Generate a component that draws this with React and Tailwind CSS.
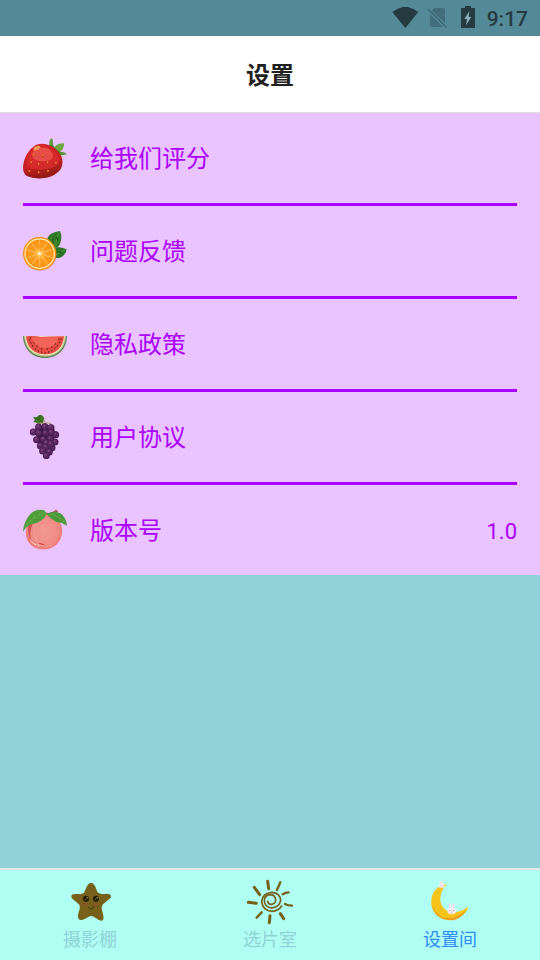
const SEEDS = [
  [57, 75], [84, 76], [49, 97], [71, 102], [98, 97], [123, 98], [43, 123], [71, 127], [99, 122],
]

const GRAPES = [
  [71, 57], [90, 56], [108, 59], [55, 72], [122, 80], [71, 75], [92, 75], [109, 73], [120, 102], [111, 119],
  [65, 95], [85, 94], [106, 92], [94, 105], [76, 113], [92, 117], [107, 108], [83, 129], [103, 132], [94, 143],
]

const MELON_SEEDS = [
  [43, 74, -25], [48, 84, -25], [53, 94, -25], [61, 102, -25], [70, 108, -20], [80, 112, -8], [90, 114, 0],
  [101, 111, 12], [111, 107, 20], [120, 100, 25], [127, 92, 25], [134, 82, 25], [138, 73, 25],
  [46, 68, -20], [57, 83, -25], [66, 94, -25], [80, 102, -5], [97, 102, 8], [110, 97, 20], [121, 87, 25], [131, 73, 20],
]

function Strawberry() {
  return (
    <svg viewBox="24 18 132 132" className="size-11 shrink-0" aria-hidden="true">
      <defs>
        <linearGradient id="berry" x1="0" y1="0" x2="0.3" y2="1">
          <stop offset="0" stopColor="#d92628" />
          <stop offset="0.65" stopColor="#c42022" />
          <stop offset="1" stopColor="#9c1c18" />
        </linearGradient>
      </defs>
      <path d="M103 48Q101 31 110 23Q117 36 113 53Z" fill="#5d9b38" />
      <path d="M114 62Q121 38 147 40Q149 59 130 68Z" fill="#6caa40" />
      <path d="M124 67Q142 61 156 72Q143 78 128 75Z" fill="#5a9734" />
      <path d="M100 44L115 46L121 55L137 66L132 77Z" fill="#4c872b" />
      <path d="M62 45Q80 38 98 44Q125 52 139 78Q147 99 137 118Q122 138 92 144Q57 148 35 138Q23 129 24 109Q29 66 62 45Z" fill="url(#berry)" />
      <path d="M37 110Q33 80 52 63Q80 48 106 58Q127 68 132 87Q133 110 107 115Q64 125 37 110Z" fill="#dd2f2f" opacity=".7" />
      <path d="M53 66Q68 50 93 53Q113 61 114 79Q110 94 86 94Q62 95 53 82Q49 74 53 66Z" fill="#e9514b" opacity=".9" />
      <path d="M57 62Q53 55 60 50Q70 45 77 50Q74 60 57 62Z" fill="#f29a55" />
      <path d="M28 128Q74 145 127 120Q113 140 82 144Q43 147 28 128Z" fill="#8e1b16" opacity=".6" />
      {SEEDS.map(([x, y]) => (
        <g key={`${x}-${y}`}>
          <ellipse cx={x} cy={y + 1} rx="4" ry="4" fill="#b8241c" opacity=".7" />
          <ellipse cx={x} cy={y} rx="2.6" ry="3" fill="#f38b35" />
        </g>
      ))}
    </svg>
  )
}

function Orange() {
  return (
    <svg viewBox="24 21 132 132" className="size-11 shrink-0" aria-hidden="true">
      <defs>
        <radialGradient id="pulp">
          <stop offset="0" stopColor="#ffbd45" />
          <stop offset=".5" stopColor="#fda01c" />
          <stop offset="1" stopColor="#f98b08" />
        </radialGradient>
      </defs>
      <path d="M97 48Q104 31 135 27Q142 43 137 59Q135 73 121 79Q105 68 97 48Z" fill="#2f7a27" />
      <path d="M117 79Q130 71 155 82Q153 99 136 107L117 109Z" fill="#2a7624" />
      <path d="M133 31Q121 52 122 72M104 46L121 60M152 83L122 98" fill="none" stroke="#5f9c3d" strokeWidth="2.5" />
      <path d="M124 45L128 53M112 51L116 61M132 89L140 93" stroke="#1f5c1c" strokeWidth="4" strokeLinecap="round" />
      <circle cx="76" cy="98" r="49" fill="#aa718e" opacity=".25" />
      <circle cx="74" cy="95" r="50" fill="#f58b00" />
      <circle cx="74" cy="95" r="46" fill="#ffe7a8" />
      <circle cx="74" cy="95" r="42" fill="url(#pulp)" />
      {[0, 36, 72, 108, 144, 180, 216, 252, 288, 324].map(angle => (
        <g key={angle} transform={`rotate(${angle} 74 95)`}>
          <path d="M74 95V54" stroke="#ffd57c" strokeWidth="2" />
          <path d="M78 83L84 58M83 80L91 62" stroke="#fdb348" strokeWidth="1.4" />
          <path d="M82 85L91 70M80 78L82 66" stroke="#f07c06" strokeWidth="1.8" />
        </g>
      ))}
      <circle cx="74" cy="95" r="5" fill="#fff2c5" />
    </svg>
  )
}

function Watermelon() {
  return (
    <svg viewBox="24 21 132 132" className="size-11 shrink-0" aria-hidden="true">
      <path d="M24 63L156 63C155 102 129 129 90 129C51 129 25 102 24 63Z" fill="#5c8452" />
      <path d="M27 63H153C151 101 126 125 90 125C54 125 29 101 27 63Z" fill="#b3c585" />
      <path d="M30 63H150C148 99 125 121 90 121C55 121 32 99 30 63Z" fill="#f3dfba" />
      <path d="M33 64Q60 62 78 66Q110 65 147 64C144 98 123 118 90 118C57 118 36 98 33 64Z" fill="#e84b44" />
      <path d="M49 66Q80 68 131 66Q123 98 90 99Q58 97 49 66Z" fill="#f2655b" />
      {MELON_SEEDS.map(([x, y, turn]) => (
        <ellipse key={`${x}-${y}`} cx={x} cy={y} rx="1.6" ry="3.2" transform={`rotate(${turn} ${x} ${y})`} fill="#6d2825" />
      ))}
    </svg>
  )
}

function Grapes() {
  return (
    <svg viewBox="24 21 132 132" className="size-11 shrink-0" aria-hidden="true">
      <path d="M53 26Q64 30 69 24Q75 18 83 23L88 31L84 46Q75 44 72 49Q64 43 55 41L60 35Z" fill="#3f7524" />
      <path d="M59 30L73 34L82 43M73 34L74 24" fill="none" stroke="#2c581c" strokeWidth="2" />
      <path d="M68 46Q82 44 92 49M87 36L94 51M91 45Q109 43 112 52M102 46L109 51" fill="none" stroke="#b49a62" strokeWidth="3" />
      <path d="M61 59L118 63L117 112L98 137L79 131L71 114Z" fill="#3c1746" />
      {GRAPES.map(([x, y]) => (
        <g key={`${x}-${y}`}>
          <circle cx={x} cy={y} r="10.5" fill="#451c4e" />
          <circle cx={x - 1} cy={y - 1} r="8.5" fill="#592861" />
          <circle cx={x - 2} cy={y - 3} r="3.5" fill="#7a437f" />
        </g>
      ))}
    </svg>
  )
}

function Peach() {
  return (
    <svg viewBox="24 24 132 132" className="size-11 shrink-0" aria-hidden="true">
      <defs>
        <radialGradient id="peach">
          <stop offset="0" stopColor="#f29a90" />
          <stop offset=".75" stopColor="#f08d86" />
          <stop offset="1" stopColor="#ea7b75" />
        </radialGradient>
      </defs>
      <path d="M38 74Q60 38 92 37Q129 42 139 76Q148 111 123 136Q92 158 57 142Q29 125 33 91Q34 81 38 74Z" fill="url(#peach)" />
      <path d="M41 74Q36 98 48 121Q42 94 53 72Z" fill="#d65050" />
      <path d="M60 76Q52 105 70 128Q86 142 110 137" fill="none" stroke="#f4a399" strokeWidth="4" opacity=".6" />
      <path d="M70 129Q80 137 93 136Q83 132 74 128Z" fill="#d83c42" />
      <path d="M48 124Q55 133 63 134M68 133L72 138" fill="none" stroke="#ffd8d3" strokeWidth="3" strokeLinecap="round" />
      <path d="M94 39Q112 39 122 29L130 34Q119 44 99 44Z" fill="#a65b59" />
      <path d="M24 96Q25 65 46 42Q65 25 88 31L95 42Q82 67 52 72Q33 78 24 96Z" fill="#4f9f3c" />
      <path d="M94 41Q117 31 136 40Q153 51 156 77Q142 67 123 65Q106 57 94 41Z" fill="#4a9838" />
      <path d="M29 83Q48 50 87 38M101 42Q130 44 150 67" fill="none" stroke="#6fb04a" strokeWidth="2.5" />
      <path d="M48 59L53 47M64 49L69 37M57 60L71 60M122 48L127 42M126 52L128 61" stroke="#3f8c35" strokeWidth="2" />
    </svg>
  )
}

function StarIcon() {
  return (
    <svg viewBox="51 51 138 138" className="size-[46px]" aria-hidden="true">
      <path d="M111 72Q123 52 135 72L142 89Q148 97 165 96Q180 94 183 101Q184 108 174 114L159 127Q152 135 157 149Q163 168 159 174Q153 180 137 168Q126 159 116 164Q101 174 90 174Q80 170 86 151Q92 134 88 128L69 112Q61 104 66 98Q71 95 84 96Q98 97 102 92Z" fill="#776019" />
      <g fill="#211b0a">
        <circle cx="108" cy="110" r="9" />
        <circle cx="138" cy="110" r="9" />
      </g>
      <g fill="#8a7434">
        <circle cx="112" cy="107" r="3" />
        <circle cx="142" cy="107" r="3" />
        <circle cx="106" cy="112" r="2" />
        <circle cx="136" cy="112" r="2" />
      </g>
      <ellipse cx="105" cy="126" rx="8" ry="3" fill="#8f4f37" />
      <ellipse cx="140" cy="127" rx="8" ry="3" fill="#8f4f37" />
      <path d="M115 136Q119 141 123 142Q130 141 131 133" fill="none" stroke="#3a2c0d" strokeWidth="2.5" strokeLinecap="round" />
    </svg>
  )
}

function SunIcon() {
  return (
    <svg viewBox="51 51 138 138" className="size-[46px]" aria-hidden="true">
      <g fill="none" stroke="#776019" strokeLinecap="round">
        <path d="M113 118Q115 128 125 127Q138 124 137 112Q134 98 120 98Q103 100 103 117Q105 136 125 138" strokeWidth="5" />
        <path d="M125 138Q148 136 152 115Q150 93 126 91Q98 93 95 118Q98 146 126 148Q145 147 155 132" strokeWidth="5" />
        <path d="M113 58L116 80M73 76L89 98M55 121L79 124M120 161L118 182M151 155L161 170" strokeWidth="9" />
        <path d="M151 61L141 84M158 97Q165 91 176 91M165 126Q174 131 186 131M95 151L80 167" strokeWidth="7" />
      </g>
    </svg>
  )
}

function Bunny({ transform }) {
  return (
    <g transform={transform}>
      <ellipse cx="-5" cy="-14" rx="4" ry="9" fill="#f8edf4" />
      <ellipse cx="5" cy="-14" rx="4" ry="9" fill="#f8edf4" />
      <path d="M-5-20V-10M5-20V-10" stroke="#efb8cf" strokeWidth="2" />
      <ellipse rx="13" ry="10" fill="#fbeef3" />
      <path d="M-8-1H-4M4-1H8M-2 3L0 4L2 3" fill="none" stroke="#81667a" strokeWidth="2" />
    </g>
  )
}

function MoonIcon() {
  return (
    <svg viewBox="51 51 138 138" className="size-[46px]" aria-hidden="true">
      <path d="M111 66Q70 72 64 113Q61 153 98 171Q135 180 161 157Q173 145 174 134Q152 152 125 151Q95 145 91 117Q88 89 111 66Z" fill="#f6c31c" />
      <path d="M64 120Q68 150 99 167Q137 174 170 143Q150 176 119 175Q68 169 64 120Z" fill="#ef9e20" />
      <Bunny transform="translate(95 71) scale(.65)" />
      <Bunny transform="translate(125 147)" />
    </svg>
  )
}

function StatusBar() {
  return (
    <div className="flex h-9 items-center justify-end gap-1 bg-[#548998] px-3 text-[#263a42]">
      <svg viewBox="33 21 84 66" className="h-[22px] w-7" role="img" aria-label="Wi-Fi">
        <path d="M37 36Q76 5 115 36L76 84Z" fill="currentColor" />
      </svg>
      <svg viewBox="129 21 84 66" className="h-[22px] w-7" role="img" aria-label="No SIM">
        <path d="M164 24H189Q195 24 195 30V69L155 32ZM150 43L189 81H156Q150 81 150 75Z" fill="#426d7a" />
        <path d="M145 28L200 83" stroke="#426d7a" strokeWidth="5" />
      </svg>
      <svg viewBox="225 21 84 66" className="h-[22px] w-7 overflow-visible" role="img" aria-label="Battery charging">
        <path d="M255 18H273V24H285V84H243V24H255Z" fill="currentColor" />
        <path d="M268 34L253 57H261L258 76L274 51H266Z" fill="#8db0ba" />
      </svg>
      <time className="pt-0.5 font-['Roboto',sans-serif] text-[21px] leading-6 font-medium">9:17</time>
    </div>
  )
}

const ITEMS = [
  { label: '给我们评分', icon: Strawberry },
  { label: '问题反馈', icon: Orange },
  { label: '隐私政策', icon: Watermelon },
  { label: '用户协议', icon: Grapes },
  { label: '版本号', icon: Peach, value: '1.0' },
]

const TABS = [
  { label: '摄影棚', icon: StarIcon },
  { label: '选片室', icon: SunIcon },
  { label: '设置间', icon: MoonIcon, active: true },
]

export default function App() {
  return (
    <div className="flex min-h-screen flex-col bg-[#91d1d8] font-['Roboto','Noto_Sans_CJK_SC',sans-serif]">
      <StatusBar />
      <header className="border-b border-[#dedede] bg-white pt-[22px] pb-[18px]">
        <h1 className="text-center text-2xl leading-9 font-bold text-[#212121]">设置</h1>
      </header>

      <main className="flex-1">
        <ul className="bg-[#e9c4ff] px-[23px] text-[#aa00ff]">
          {ITEMS.map(({ label, icon: Icon, value }) => (
            <li key={label} className="border-b-3 border-[#aa00ff] last:border-b-0">
              <button type="button" className="flex h-[90px] w-full items-center gap-[23px] text-left">
                <Icon />
                <span className="flex-1 pt-0.5 text-2xl">{label}</span>
                {value && <span className="pt-0.5 text-[22px]">{value}</span>}
              </button>
            </li>
          ))}
        </ul>
      </main>

      <nav className="grid grid-cols-3 border-t-2 border-[#e6e8e8] bg-[#affff2]">
        {TABS.map(({ label, icon: Icon, active }) => (
          <a
            key={label}
            href="#"
            aria-current={active ? 'page' : undefined}
            className={`flex h-[90px] flex-col items-center pt-[9px] text-lg leading-[30px] ${active ? 'text-[#2f8af5]' : 'text-[#91d1d8]'}`}
          >
            <Icon />
            <span>{label}</span>
          </a>
        ))}
      </nav>
    </div>
  )
}
